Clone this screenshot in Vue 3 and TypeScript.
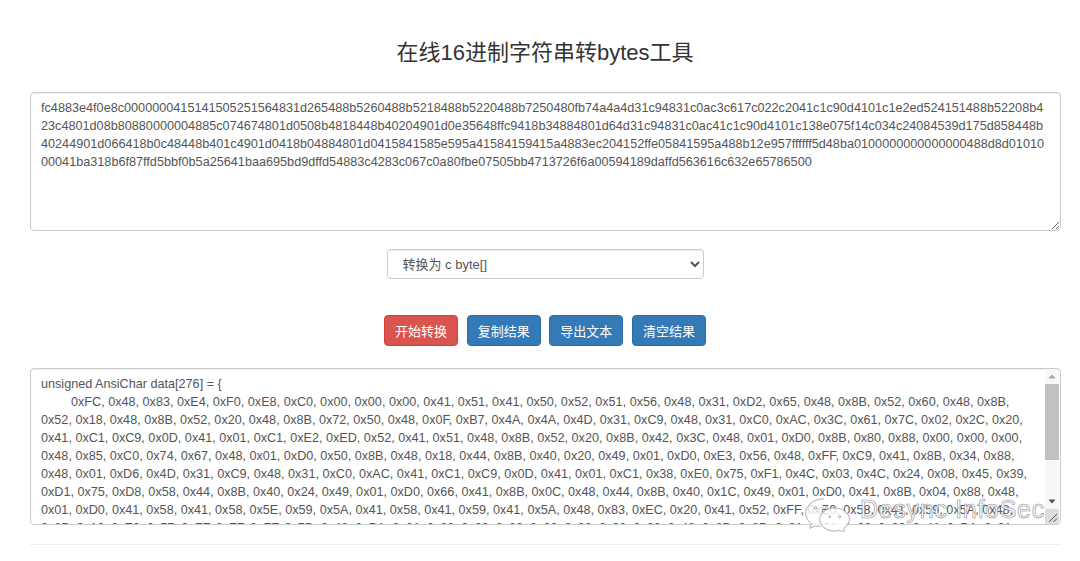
<script setup lang="ts">
const hex =
  'fc4883e4f0e8c0000000415141505251564831d265488b5260488b5218488b5220488b7250480fb74a4a4d31c94831c0ac3c617c022c2041c1c90d4101c1e2ed524151488b52208b423c4801d08b80880000004885c074674801d0508b4818448b40204901d0e35648ffc9418b34884801d64d31c94831c0ac41c1c90d4101c138e075f14c034c24084539d175d858448b40244901d066418b0c48448b401c4901d0418b04884801d0415841585e595a41584159415a4883ec204152ffe05841595a488b12e957ffffff5d48ba0100000000000000488d8d0101000041ba318b6f87ffd5bbf0b5a25641baa695bd9dffd54883c4283c067c0a80fbe07505bb4713726f6a00594189daffd563616c632e65786500'

const bytes = (hex.match(/../g) ?? []).map((b) => '0x' + b.toUpperCase())
const output = `unsigned AnsiChar data[${bytes.length}] = {\n\t${bytes.join(', ')}\n};`
const buttons = [
  { label: '开始转换', kind: 'danger' },
  { label: '复制结果', kind: 'primary' },
  { label: '导出文本', kind: 'primary' },
  { label: '清空结果', kind: 'primary' },
]
</script>

<template>
  <main class="page">
    <h1 class="title">在线16进制字符串转bytes工具</h1>
    <textarea class="field source" :value="hex" spellcheck="false"></textarea>
    <div class="select-row">
      <select class="mode">
        <option>转换为 c byte[]</option>
      </select>
    </div>
    <div class="actions">
      <button v-for="b in buttons" :key="b.label" class="btn" :class="b.kind">{{ b.label }}</button>
    </div>
    <div class="result-wrap">
      <textarea class="field result" :value="output" spellcheck="false"></textarea>
      <div class="scrollbar" aria-hidden="true">
        <svg class="arrow" width="14" height="15" viewBox="0 0 14 15"><path d="M3.500 9.500 7 5.500l3.500 4z" fill="#a3a3a3" /></svg>
        <div class="thumb"></div>
        <div class="track"></div>
        <svg class="arrow" width="14" height="15" viewBox="0 0 14 15"><path d="M3.500 5.500 7 9.500l3.500-4z" fill="#505050" /></svg>
        <svg class="corner" width="14" height="15" viewBox="0 0 14 15" fill="none" stroke="#555" stroke-width="1">
          <path d="M4 13 12 5M8.500 13 12 9.500" />
        </svg>
      </div>
      <div class="watermark">
        <svg class="wechat" width="48" height="34" viewBox="0 0 58 38" preserveAspectRatio="none" fill="none" stroke="#a0a0a0" stroke-width="1">
          <path d="M24 1C12 1 2 8 2 17c0 5 3 9 7 12l-2 5 7-3c2 .5 4 .8 6 .8" fill="#fff" fill-opacity=".8" />
          <path d="M37 11c-10 0-18 6-18 13s8 13 18 13c2 0 4-.3 6-1l6 3-1-5c4-3 7-6 7-10 0-7-8-13-19-13z" fill="#fff" fill-opacity=".8" />
          <circle cx="14" cy="11" r="1.500" />
          <circle cx="27" cy="11" r="1.500" />
          <circle cx="31" cy="21" r="1.200" />
          <circle cx="43" cy="21" r="1.200" />
        </svg>
        <span class="mark-text">Desync InfoSec</span>
      </div>
    </div>
    <hr class="rule" />
  </main>
</template>

<style>
html, body { margin: 0; background: #fff; }
</style>

<style scoped>
.page {
  box-sizing: border-box;
  width: 1080px;
  height: 561px;
  padding: 0 20px 0 30px;
  overflow: hidden;
  font-family: "Liberation Sans", "Noto Sans CJK SC", sans-serif;
  color: #333;
}
.title {
  margin: 0;
  padding-top: 40px;
  height: 52px;
  font-size: 22px;
  line-height: 26px;
  font-weight: 400;
  text-align: center;
}
.field {
  display: block;
  box-sizing: border-box;
  width: 1031px;
  margin: 0;
  padding: 6px 11px 6px 10px;
  border: 1px solid #ccc;
  border-radius: 4px;
  box-shadow: inset 0 1px 1px rgba(0, 0, 0, .075);
  font: 12.67px/18px "Liberation Sans", "Noto Sans CJK SC", sans-serif;
  color: #555;
  background: #fff;
  outline: none;
}
.source { height: 139px; overflow: hidden; }
.select-row { display: flex; justify-content: center; padding-top: 18px; }
.mode {
  box-sizing: border-box;
  width: 317px;
  height: 30px;
  padding: 0 11px;
  border: 1px solid #ccc;
  border-radius: 4px;
  background: #fff;
  box-shadow: inset 0 1px 1px rgba(0, 0, 0, .075);
  font: 13px "Liberation Sans", "Noto Sans CJK SC", sans-serif;
  color: #555;
}
.actions { display: flex; justify-content: center; gap: 8.67px; padding-top: 36px; }
.btn {
  box-sizing: border-box;
  width: 74px;
  height: 31px;
  padding: 0;
  border: 1px solid transparent;
  border-radius: 4px;
  font: 13px "Liberation Sans", "Noto Sans CJK SC", sans-serif;
  color: #fff;
}
.danger { background: #d9534f; border-color: #d43f3a; }
.primary { background: #337ab7; border-color: #2e6da4; }
.result-wrap { position: relative; margin-top: 22px; }
.result {
  height: 157px;
  padding-right: 20px;
  overflow: hidden;
  font-size: 12.63px;
  tab-size: 30px;
}
.scrollbar {
  position: absolute;
  top: 1px;
  right: 1px;
  bottom: 1px;
  width: 14px;
  display: flex;
  flex-direction: column;
  background: #f7f7f7;
  border-radius: 0 3px 3px 0;
  overflow: hidden;
}
.arrow, .corner { display: block; flex: none; }
.thumb { flex: none; height: 76px; background: #c1c1c1; }
.track { flex: 1; }
.corner { background: #dcdcdc; }
.watermark {
  position: absolute;
  left: 774px;
  top: 130px;
  display: flex;
  align-items: flex-start;
  pointer-events: none;
}
.wechat { display: block; flex: none; }
.mark-text {
  margin: -3px 0 0 8px;
  font-size: 25px;
  line-height: 28px;
  letter-spacing: .7px;
  color: rgba(255, 255, 255, .8);
  -webkit-text-stroke: .6px #8c8c8c;
  white-space: nowrap;
}
.rule { margin: 19px 0 0; width: 1031px; border: 0; border-top: 1px solid #eee; }
</style>
